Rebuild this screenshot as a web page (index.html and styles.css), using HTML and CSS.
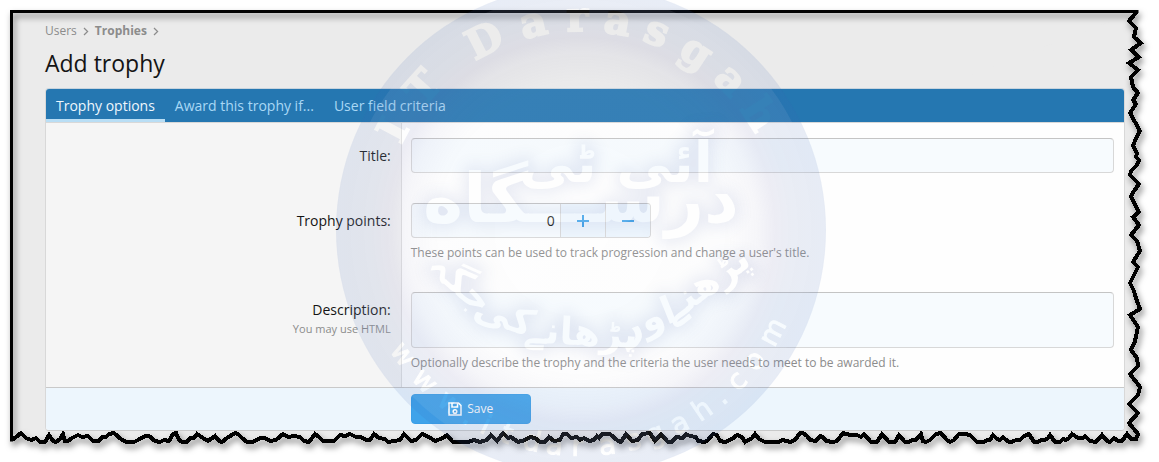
FILE: index.html
```html
<!DOCTYPE html>
<html lang="en">
<head>
<meta charset="utf-8">
<meta name="viewport" content="width=device-width, initial-scale=1">
<title>Add trophy</title>
<link rel="stylesheet" href="styles.css">
</head>
<body>
<div class="page">
  <svg class="torn" viewBox="0 0 1159 462" preserveAspectRatio="none" aria-hidden="true">
    <defs>
      <path id="edge" d="M1137 11.500L1129 21L1136 28L1134 37L1141 43L1131 50L1139 57L1129 63L1138 70L1131 77L1133 87L1138 93L1133 100L1136 104L1130 113L1135 122L1140 131L1136 138L1133 146L1137 153L1136 157L1139 160L1137 165L1131 171L1130 175L1139 184L1134 191L1131 197L1139 212L1133 217L1139 225L1131 235L1137 241L1140 251L1133 262L1138 267L1130 283L1134 291L1136 298L1140 309L1130 315L1138 327L1135 341L1131 350L1137 358L1138 366L1130 374L1140 387L1138 395L1129 404L1138 413L1129 423L1138 434L1136 439L1131 439L1127 434L1122 441L1118 441L1114 438L1110 442L1107 441L1102 435L1096 442L1090 441L1085 436L1083 438L1078 438L1072 434L1069 438L1066 440L1063 439L1060 442L1055 442L1050 435L1048 438L1045 440L1041 440L1038 442L1034 442L1029 434L1024 436L1020 440L1016 440L1012 442L1009 442L1005 439L1003 437L1000 440L997 439L993 435L990 440L987 440L984 442L977 442L970 435L965 434L959 434L954 440L950 442L947 440L941 433L936 434L930 440L926 442L923 441L921 434L916 440L912 440L909 442L905 442L899 435L895 442L889 442L882 434L877 442L871 442L864 434L861 437L857 435L850 435L843 433L837 441L833 442L826 441L823 437L820 436L816 441L810 440L807 436L803 433L800 433L795 440L790 442L783 440L778 442L765 442L759 439L755 434L752 438L745 442L742 437L737 435L732 439L725 442L720 441L717 435L713 434L708 440L705 442L698 441L696 437L690 436L686 434L683 438L676 437L672 442L668 442L661 434L655 441L650 433L642 434L638 440L632 441L626 434L621 442L618 441L610 434L602 434L599 438L597 436L594 440L589 441L584 438L580 440L577 437L571 438L567 434L563 434L560 440L554 441L549 437L545 442L540 442L535 438L530 437L525 440L518 442L511 437L508 438L503 433L497 441L491 435L487 440L480 442L474 440L468 442L453 442L447 435L443 438L435 441L429 437L422 434L416 440L411 441L404 434L400 440L388 442L385 439L379 438L374 434L370 440L366 440L361 437L356 437L350 434L345 436L340 435L334 441L330 441L323 441L319 437L315 434L309 442L304 441L300 437L294 436L288 437L283 434L276 440L270 441L265 438L260 438L253 442L247 442L242 438L238 434L235 433L227 438L222 442L219 441L215 436L208 441L203 438L197 434L194 438L190 438L187 442L182 442L179 440L176 433L173 434L169 441L164 440L160 442L155 441L149 436L145 436L138 440L134 442L126 442L121 439L114 433L109 434L106 437L102 437L99 441L93 441L88 436L82 437L78 435L72 438L68 441L65 441L63 434L60 439L56 442L53 441L49 435L45 442L40 442L36 438L32 440L28 439L26 438L21 433L16 437L12 440"/>
    </defs>
    <path class="torn-fill" d="M11 11H1130V434H11Z"/>
    <use class="torn-fill" href="#edge"/>
    <g class="torn-line">
      <path d="M11.500 441.500V11.500H1138.500"/>
      <use class="torn-edge" href="#edge"/>
    </g>
  </svg>

  <main class="content">
    <nav class="crumbs" aria-label="Breadcrumb">
      <a href="#users">Users</a>
      <svg class="chev" viewBox="0 0 6 9" aria-hidden="true"><path d="M1 1l3.600 3.500L1 8"/></svg>
      <a href="#trophies" class="crumb-current">Trophies</a>
      <svg class="chev" viewBox="0 0 6 9" aria-hidden="true"><path d="M1 1l3.600 3.500L1 8"/></svg>
    </nav>
    <h1 class="title">Add trophy</h1>

    <form class="panel">
      <nav class="tabs" aria-label="Trophy sections">
        <a href="#options" class="tab tab-active">Trophy options</a>
        <a href="#award" class="tab">Award this trophy if...</a>
        <a href="#fields" class="tab">User field criteria</a>
      </nav>

      <div class="row">
        <div class="label-cell"><label for="t-title">Title:</label></div>
        <div class="field-cell"><input id="t-title" class="box" type="text"></div>
      </div>
      <div class="row">
        <div class="label-cell"><label for="t-points">Trophy points:</label></div>
        <div class="field-cell">
          <div class="stepper">
            <input id="t-points" class="stepper-value" type="text" inputmode="numeric" value="0">
            <button class="step" type="button" aria-label="Increase"><svg viewBox="0 0 12 12"><path d="M6 0v12M0 6h12"/></svg></button>
            <button class="step" type="button" aria-label="Decrease"><svg viewBox="0 0 12 12"><path d="M0 6h12"/></svg></button>
          </div>
          <p class="hint">These points can be used to track progression and change a user's title.</p>
        </div>
      </div>
      <div class="row">
        <div class="label-cell"><label for="t-desc">Description:</label><p class="label-note">You may use HTML</p></div>
        <div class="field-cell">
          <textarea id="t-desc" class="box box-tall"></textarea>
          <p class="hint">Optionally describe the trophy and the criteria the user needs to meet to be awarded it.</p>
        </div>
      </div>

      <div class="footer">
        <div class="footer-body">
          <button class="save" type="button">
            <svg viewBox="0 0 14 14" aria-hidden="true"><path d="M1 1h9.500L13 3.500V13H1zM4 1v4h5.500V1"/><circle cx="7" cy="9.500" r="1.800"/></svg>
            Save
          </button>
        </div>
      </div>
    </form>
  </main>

  <div class="watermark" aria-hidden="true">
    <svg class="seal" viewBox="336 -15 490 490">
      <defs>
        <radialGradient id="tint" gradientUnits="userSpaceOnUse" cx="581" cy="230" r="245">
          <stop offset="0" stop-color="#5a5aa0" stop-opacity="0"/>
          <stop offset=".6" stop-color="#5a5aa0" stop-opacity=".01"/>
          <stop offset=".72" stop-color="#5a5aa0" stop-opacity=".05"/>
          <stop offset=".79" stop-color="#5555a0" stop-opacity=".1"/>
          <stop offset=".86" stop-color="#4664aa" stop-opacity=".11"/>
          <stop offset="1" stop-color="#3c64b4" stop-opacity=".12"/>
        </radialGradient>
        <filter id="soft" x="-20%" y="-20%" width="140%" height="140%"><feGaussianBlur stdDeviation="8"/></filter>
        <g id="urdu" class="urdu" text-anchor="middle">
          <text x="616" y="182" font-size="56">آئی ٹی</text>
          <text x="581" y="222" font-size="68">درســـگاه</text>
          <text font-size="38" transform="translate(712 294) rotate(-36)">پڑھنے</text>
          <text font-size="38" transform="translate(652 331) rotate(-22)">اور</text>
          <text font-size="38" transform="translate(580 345) rotate(3)">پڑھانے</text>
          <text font-size="38" transform="translate(500 327) rotate(20)">کی</text>
          <text font-size="38" transform="translate(453 292) rotate(42)">جگہ</text>
        </g>
        <g id="arc-top" class="arc-top" text-anchor="middle">
          <text x="581" y="31" transform="rotate(-62 581 230)">I</text>
          <text x="581" y="31" transform="rotate(-48 581 230)">T</text>
          <text x="581" y="31" transform="rotate(-27 581 230)">D</text>
          <text x="581" y="31" transform="rotate(-13 581 230)">a</text>
          <text x="581" y="31" transform="rotate(-1 581 230)">r</text>
          <text x="581" y="31" transform="rotate(10 581 230)">a</text>
          <text x="581" y="31" transform="rotate(21 581 230)">s</text>
          <text x="581" y="31" transform="rotate(33 581 230)">g</text>
          <text x="581" y="31" transform="rotate(45 581 230)">a</text>
          <text x="581" y="31" transform="rotate(57 581 230)">h</text>
        </g>
        <g id="arc-bottom" class="arc-bottom" text-anchor="middle">
          <text x="581" y="456" transform="rotate(55 581 230)">w</text>
          <text x="581" y="456" transform="rotate(46 581 230)">w</text>
          <text x="581" y="456" transform="rotate(37 581 230)">w</text>
          <text x="581" y="456" transform="rotate(31 581 230)">.</text>
          <text x="581" y="456" transform="rotate(26 581 230)">i</text>
          <text x="581" y="456" transform="rotate(20 581 230)">t</text>
          <text x="581" y="456" transform="rotate(13 581 230)">d</text>
          <text x="581" y="456" transform="rotate(7 581 230)">a</text>
          <text x="581" y="456" transform="rotate(1 581 230)">r</text>
          <text x="581" y="456" transform="rotate(-7 581 230)">a</text>
          <text x="581" y="456" transform="rotate(-14 581 230)">s</text>
          <text x="581" y="456" transform="rotate(-20 581 230)">g</text>
          <text x="581" y="456" transform="rotate(-27 581 230)">a</text>
          <text x="581" y="456" transform="rotate(-34 581 230)">h</text>
          <text x="581" y="456" transform="rotate(-40 581 230)">.</text>
          <text x="581" y="456" transform="rotate(-46 581 230)">c</text>
          <text x="581" y="456" transform="rotate(-53 581 230)">o</text>
          <text x="581" y="456" transform="rotate(-62 581 230)">m</text>
        </g>
        <mask id="cutout" maskUnits="userSpaceOnUse" x="336" y="-15" width="490" height="490">
          <rect x="336" y="-15" width="490" height="490" fill="#fff"/>
          <use href="#urdu" fill="#000"/>
          <use href="#arc-top" fill="#000" stroke="#000" stroke-width="2"/>
          <use href="#arc-bottom" fill="#000" stroke="#000" stroke-width="1"/>
        </mask>
      </defs>
      <circle cx="581" cy="230" r="237" fill="#fff" opacity=".08"/>
      <g mask="url(#cutout)">
        <circle cx="581" cy="230" r="245" fill="url(#tint)"/>
        <use class="glow" href="#urdu" filter="url(#soft)"/>
      </g>
      <use href="#urdu" fill="#fff" opacity=".1"/>
    </svg>
  </div>
</div>
</body>
</html>
```

FILE: styles.css
```css
* { box-sizing: border-box; }

body {
  margin: 0;
  background: #fff;
  color: #141414;
  font: 14px/20px "Open Sans", "Noto Sans", sans-serif;
}

p, h1 { margin: 0; }
a { color: inherit; text-decoration: none; }

.page {
  position: relative;
  padding: 21px 34px 31px 45px;
}

.torn {
  position: absolute;
  inset: 0;
  width: 100%;
  height: 100%;
}
.torn-fill { fill: #ebebeb; }
.torn-line {
  fill: none;
  stroke: #000;
  stroke-width: 3;
  filter: drop-shadow(2px 4px 3px rgba(0, 0, 0, .5));
}
.torn-edge {
  stroke-width: 4;
  shape-rendering: crispEdges;
}

.content { position: relative; }

.crumbs {
  display: flex;
  align-items: center;
  gap: 6px;
  color: #8c8c8c;
  font-size: 12px;
}
.crumb-current { font-weight: 700; }
.chev {
  width: 6px;
  height: 9px;
  fill: none;
  stroke: #8c8c8c;
  stroke-width: 1.25;
}

.title {
  padding: 6px 0 9px;
  font-size: 23px;
  font-weight: 400;
  line-height: 32px;
}

.panel {
  border: 1px solid #d8d8d8;
  border-top-color: #c8d4de;
  border-bottom-color: #c9c9c9;
  border-radius: 4px;
  background: #fefefe;
  overflow: hidden;
}

.tabs {
  display: flex;
  background: #2577b1;
  border-bottom: 1px solid #d8d8d8;
  color: #a9d7f5;
}
.tab {
  padding: 7px 10px 3px;
  border-bottom: 3px solid transparent;
}
.tab-active {
  color: #edf6fd;
  border-bottom-color: #b9def5;
}

.row { display: flex; }
.label-cell {
  width: 33%;
  padding: 23px 10px 15px;
  background: #f5f5f5;
  border-right: 1px solid #dfdfdf;
  text-align: right;
}
.label-note {
  color: #8c8c8c;
  font-size: 11px;
  line-height: 18px;
}
.field-cell {
  flex: 1;
  padding: 15px 10px 15px 9px;
}

.box, .stepper {
  display: block;
  height: 35px;
  border: 1px solid #d8d8d8;
  border-top-color: #c4c4c4;
  border-radius: 4px;
  background: #f7fbfe;
}
.box {
  width: 100%;
  padding: 6px;
  font: inherit;
  resize: none;
}
.box-tall { height: 56px; }

.stepper {
  display: flex;
  width: 240px;
  overflow: hidden;
}
.stepper-value {
  flex: 1;
  min-width: 0;
  padding: 0 5px;
  border: 0;
  background: transparent;
  color: inherit;
  font: inherit;
  text-align: right;
}
.step {
  display: grid;
  place-items: center;
  width: 45px;
  padding: 0;
  border: 0;
  border-left: 1px solid #d8d8d8;
  background: #edf6fd;
}
.step svg {
  width: 12px;
  height: 12px;
  stroke: #3a9fe8;
  stroke-width: 2;
}

.hint {
  padding-top: 6px;
  color: #8c8c8c;
  font-size: 12px;
  line-height: 18px;
}

.footer {
  display: flex;
  justify-content: flex-end;
  border-top: 1px solid #c9c9c9;
  background: #edf6fd;
}
.footer-body {
  width: 67%;
  padding: 6px 10px 6px 9px;
}
.save {
  display: flex;
  align-items: center;
  justify-content: center;
  gap: 5px;
  width: 120px;
  height: 30px;
  border: 1px solid #3a9fe8;
  border-radius: 4px;
  background: #3fa3ea;
  color: #fff;
  font: 12px/18px "Open Sans", "Noto Sans", sans-serif;
}
.save svg {
  width: 14px;
  height: 14px;
  fill: none;
  stroke: #fff;
  stroke-width: 1.5;
}

.watermark {
  position: absolute;
  inset: 0;
  display: flex;
  justify-content: center;
  padding-left: 3px;
  overflow: hidden;
  pointer-events: none;
}
.seal {
  flex: none;
  width: 490px;
  height: 490px;
  margin-top: -15px;
}
.urdu { font: 700 44px "DejaVu Sans", sans-serif; }
.arc-top { font: 700 41px "DejaVu Serif", serif; }
.arc-bottom { font: 28px "DejaVu Sans", sans-serif; }
.glow {
  fill: #5064aa;
  stroke: #5064aa;
  stroke-width: 8;
  opacity: .12;
}
```
